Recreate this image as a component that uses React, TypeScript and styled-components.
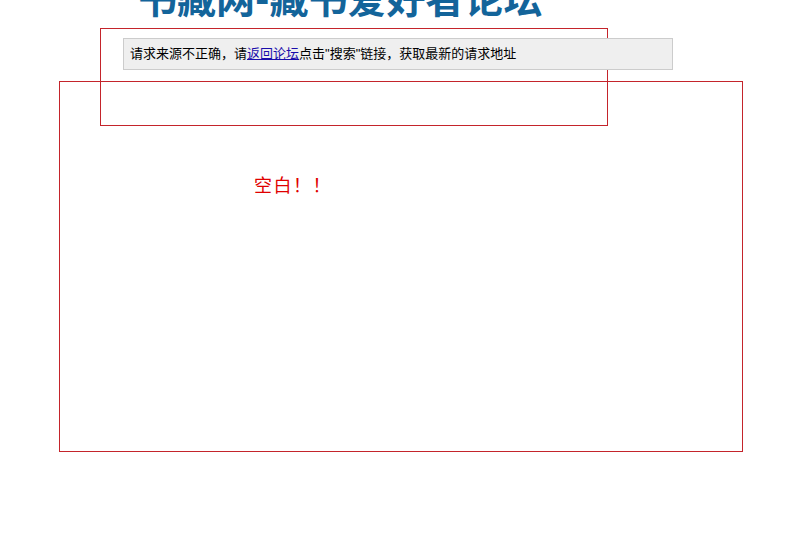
import styled, { createGlobalStyle } from "styled-components";

const GlobalStyle = createGlobalStyle`
  html, body {
    margin: 0;
    padding: 0;
    background: #ffffff;
    font-family: "Liberation Sans", "Noto Sans CJK SC", sans-serif;
    overflow: hidden;
  }
`;

export default function App() {
  return (
    <>
      <GlobalStyle />
      <Page>
        <Title>书藏网-藏书爱好者论坛</Title>
        <NoticeFrame>
          <Notice>
            请求来源不正确，请<NoticeLink href="#">返回论坛</NoticeLink>
            点击"搜索"链接，获取最新的请求地址
          </Notice>
        </NoticeFrame>
        <ContentFrame>
          <EmptyText>空白！！</EmptyText>
        </ContentFrame>
      </Page>
    </>
  );
}

const Page = styled.div`
  width: 798px;
  height: 533px;
  overflow: hidden;
`;

const Title = styled.h1`
  margin: -23px 0 0 138px;
  height: 39px;
  font-size: 39px;
  line-height: 39px;
  font-weight: 600;
  color: #13649a;
  font-family: "Noto Sans CJK SC", sans-serif;
  white-space: nowrap;
`;

const NoticeFrame = styled.div`
  box-sizing: border-box;
  margin: 12px 0 0 100px;
  width: 508px;
  height: 98px;
  border: 1px solid #c4242b;
  padding: 9px 0 0 22px;
`;

const Notice = styled.div`
  box-sizing: border-box;
  width: 550px;
  height: 32px;
  padding-left: 6px;
  background: #efefef;
  border: 1px solid #cccccc;
  font-size: 13px;
  line-height: 30px;
  color: #000000;
  white-space: nowrap;
`;

const NoticeLink = styled.a`
  color: #1a0dab;
  text-decoration: underline;
`;

const ContentFrame = styled.div`
  box-sizing: border-box;
  margin: -45px 0 0 59px;
  width: 684px;
  height: 371px;
  border: 1px solid #c4242b;
  padding: 92px 0 0 194px;
`;

const EmptyText = styled.div`
  font-size: 18px;
  line-height: 20px;
  letter-spacing: 1.5px;
  color: #e00000;
  font-family: "Noto Sans CJK SC", sans-serif;
`;
